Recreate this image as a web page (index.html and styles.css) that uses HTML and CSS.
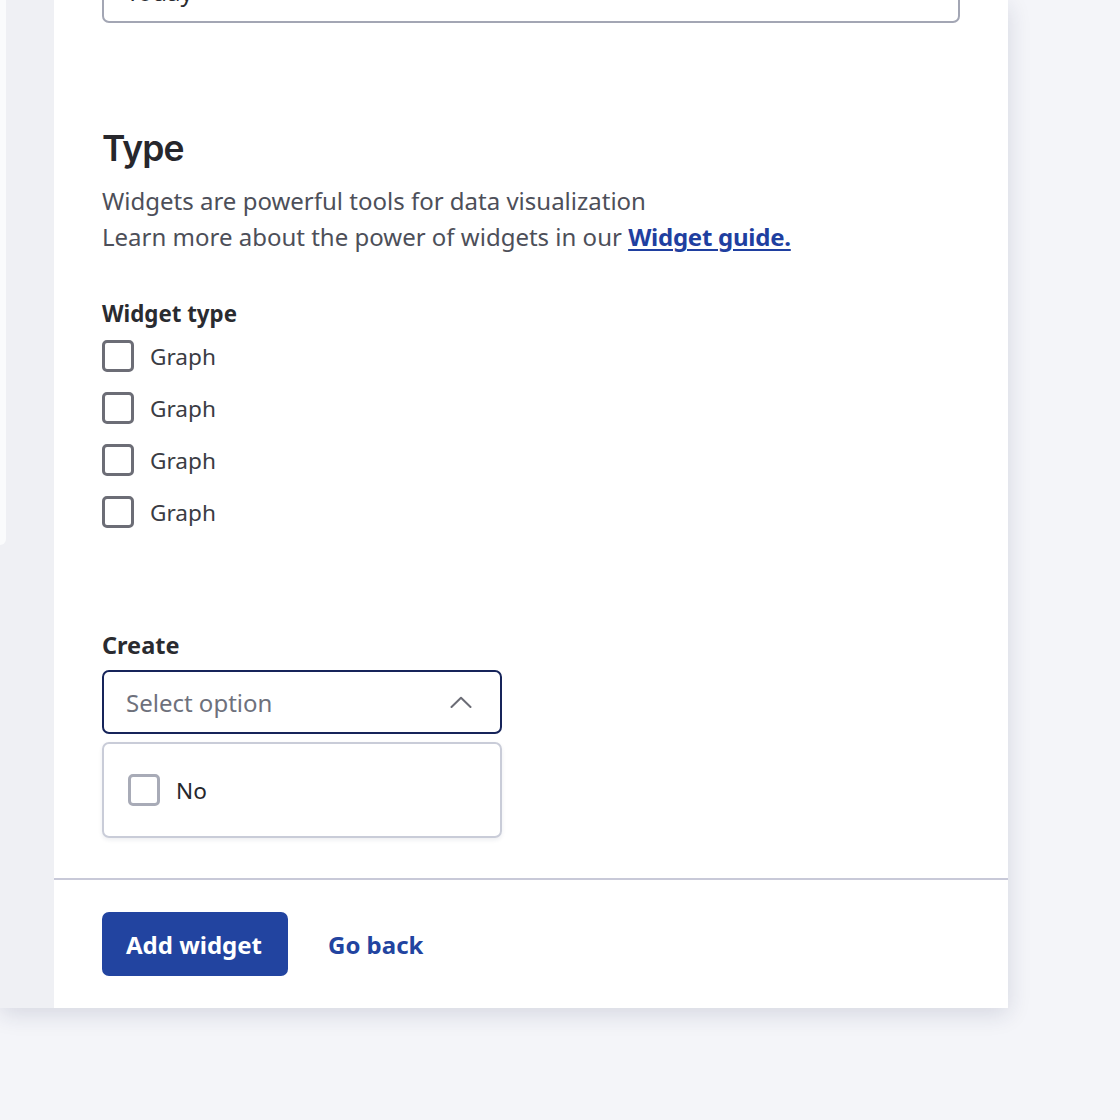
FILE: index.html
```html
<!DOCTYPE html>
<html lang="en">
<head>
<meta charset="utf-8">
<title>Add widget</title>
<link rel="stylesheet" href="styles.css">
</head>
<body>
<div class="stage">
  <aside class="side"><div class="ghost-card"></div></aside>
  <main class="panel">
    <div class="content">
      <div class="input">Today</div>

      <h2 class="title">Type</h2>
      <p class="desc">Widgets are powerful tools for data visualization<br>Learn more about the power of widgets in our <a href="#" class="link">Widget guide.</a></p>

      <div class="field-label">Widget type</div>
      <ul class="checks">
        <li class="check"><span class="box"></span><span class="check-text">Graph</span></li>
        <li class="check"><span class="box"></span><span class="check-text">Graph</span></li>
        <li class="check"><span class="box"></span><span class="check-text">Graph</span></li>
        <li class="check"><span class="box"></span><span class="check-text">Graph</span></li>
      </ul>

      <div class="field-label create-label">Create</div>
      <div class="select">
        <span class="placeholder">Select option</span>
        <svg class="chevron" width="22" height="12" viewBox="0 0 22 12" fill="none"><path d="M1.5 11 L11 1.8 L20.5 11" stroke="#6b6c75" stroke-width="2" stroke-linecap="round" stroke-linejoin="round"/></svg>
      </div>
      <div class="menu">
        <div class="check"><span class="box box-light"></span><span class="check-text dark">No</span></div>
      </div>
    </div>
    <footer class="footer">
      <button class="btn-primary">Add widget</button>
      <a href="#" class="btn-link">Go back</a>
    </footer>
  </main>
</div>
</body>
</html>
```

FILE: styles.css
```css
* { box-sizing: border-box; }
html, body { margin: 0; padding: 0; }
body {
  background: #f4f5f9;
  font-family: "Noto Sans", "Open Sans", sans-serif;
  color: #2a2b30;
  width: 1120px;
  height: 1120px;
  overflow: hidden;
}
.stage {
  width: 1008px;
  height: 1008px;
  display: flex;
  background: #eff0f4;
  box-shadow: 0 6px 22px rgba(30, 35, 80, 0.14);
}
.side {
  width: 54px;
  flex: none;
}
.ghost-card {
  width: 6px;
  height: 545px;
  background: #fafbfc;
  border-radius: 0 0 8px 0;
}
.panel {
  flex: 1;
  background: #ffffff;
  display: flex;
  flex-direction: column;
}
.content {
  padding: 0 48px;
}
.input {
  margin-top: -41px;
  height: 64px;
  border: 2px solid #a3a6b4;
  border-radius: 7px;
  padding: 0 22px;
  display: flex;
  align-items: center;
  font-size: 24px;
  color: #2a2b30;
}
.title {
  margin: 104px 0 0;
  font-family: "Inter", "Noto Sans", sans-serif;
  font-weight: 600;
  font-size: 35.5px;
  line-height: 44px;
  letter-spacing: -0.9px;
  color: #27272c;
}
.desc {
  margin: 12px 0 0;
  font-size: 24px;
  line-height: 36px;
  color: #4d4f59;
}
.link {
  color: #1f3fa0;
  font-weight: 700;
  letter-spacing: -0.25px;
  text-decoration: underline;
  text-underline-offset: 3px;
  text-decoration-thickness: 2px;
}
.field-label {
  margin-top: 44px;
  font-size: 22.3px;
  line-height: 30px;
  font-weight: 700;
  color: #2a2b30;
}
.checks {
  list-style: none;
  margin: 11px 0 0;
  padding: 0;
  display: flex;
  flex-direction: column;
  gap: 20px;
}
.check {
  display: flex;
  align-items: center;
  gap: 16px;
  height: 32px;
}
.box {
  width: 32px;
  height: 32px;
  border: 3px solid #6c6d76;
  border-radius: 5px;
  flex: none;
  background: #fff;
}
.box-light { border-color: #a8abb7; }
.check-text {
  font-size: 22.6px;
  color: #3a3b43;
}
.check-text.dark { color: #26272c; }
.create-label {
  margin-top: 102px;
  font-size: 23.5px;
}
.select {
  margin-top: 10px;
  width: 400px;
  height: 64px;
  border: 2px solid #16245a;
  border-radius: 7px;
  padding: 0 28px 0 22px;
  display: flex;
  align-items: center;
  justify-content: space-between;
}
.placeholder {
  font-size: 24px;
  color: #6e717c;
}
.chevron { display: block; }
.menu {
  margin-top: 8px;
  width: 400px;
  border: 2px solid #c9ccd8;
  border-radius: 7px;
  padding: 30px 24px;
  box-shadow: 0 2px 4px rgba(30, 35, 80, 0.08);
}
.footer {
  margin-top: auto;
  border-top: 2px solid #c8c9d8;
  padding: 32px 48px;
  display: flex;
  align-items: center;
  gap: 40px;
}
.btn-primary {
  height: 64px;
  width: 186px;
  border: none;
  border-radius: 7px;
  background: #2244a0;
  color: #ffffff;
  font-family: "Noto Sans", sans-serif;
  font-weight: 700;
  font-size: 24px;
  padding: 0 0 0 1px;
  text-align: left;
  padding-left: 24px;
}
.btn-link {
  color: #2244a0;
  font-weight: 700;
  font-size: 24px;
  text-decoration: none;
}
```
